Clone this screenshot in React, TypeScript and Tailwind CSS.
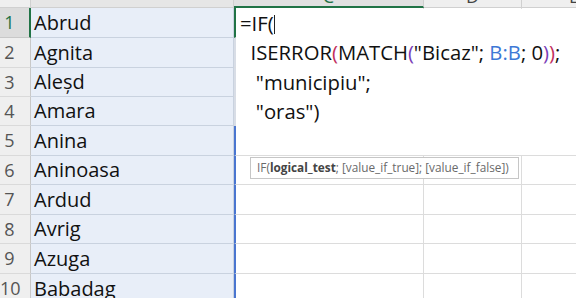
import React from "react";

const names = ["Abrud", "Agnita", "Aleșd", "Amara", "Anina", "Aninoasa", "Ardud", "Avrig", "Azuga", "Babadag"];
const heights = ["h-[30px]", "h-[30px]", "h-[29px]", "h-[29px]", "h-[30px]", "h-[29px]", "h-[30px]", "h-[29px]", "h-[30px]", "h-[30px]"];

export default function App() {
  const font = { fontFamily: '"Open Sans", "Noto Sans", sans-serif' };
  return (
    <div className="relative w-[576px] h-[298px] overflow-hidden bg-white" style={font}>
      {/* column header strip */}
      <div className="flex h-[8px] bg-[#efefef]">
        <div className="w-[31px] shrink-0 border-b border-r border-[#d0d0d0]" />
        <div className="w-[203px] shrink-0 border-b border-r border-[#d0d0d0] bg-[#e6e6e6] overflow-hidden" />
        <div className="w-[190px] shrink-0 border-b-2 border-b-[#217346] border-r border-r-[#d0d0d0] bg-[#e1e1e1] overflow-hidden flex justify-center">
          <span className="text-[18px] leading-none -mt-[13px] text-[#217346]">C</span>
        </div>
        <div className="w-[98px] shrink-0 border-b border-r border-[#d0d0d0] overflow-hidden flex justify-center">
          <span className="text-[18px] leading-none -mt-[13px] text-[#444]">D</span>
        </div>
        <div className="w-[104px] shrink-0 border-b border-[#d0d0d0] overflow-hidden flex justify-center">
          <span className="text-[18px] leading-none -mt-[13px] text-[#444]">E</span>
        </div>
      </div>

      {/* rows */}
      {names.map((n, i) => (
        <div key={n} className={`flex ${heights[i]}`}>
          <div
            className={`w-[31px] shrink-0 flex items-center border-b ${
              i === 0
                ? "bg-[#dcdcdc] border-r-2 border-r-[#217346] border-b-[#c8c8c8]"
                : "bg-[#efefef] border-r border-r-[#c8c8c8] border-b-[#dadada]"
            }`}
          >
            <span
              className={`w-[19px] text-center text-[18px] ${i === 0 ? "text-[#217346]" : "text-[#555]"}`}
            >
              {i + 1}
            </span>
          </div>
          <div className="w-[203px] shrink-0 bg-[#e8eef8] border-b border-r border-[#c9d2df] flex items-center pl-[3px] text-[20px] text-[#111]">
            {n}
          </div>
          <div
            className={`w-[190px] shrink-0 border-b border-r border-r-[#dcdcdc] border-b-[#dcdcdc] ${
              i === 0
                ? "border-l-2 border-l-[#217346]"
                : i < 4
                ? "border-l-2 border-l-[#d8dde6]"
                : "border-l-2 border-l-[#4a76d0]"
            }`}
          />
          <div className="w-[98px] shrink-0 border-b border-r border-[#dcdcdc]" />
          <div className="flex-1 border-b border-[#dcdcdc]" />
        </div>
      ))}

      {/* in-cell formula editor */}
      <div className="absolute left-[236px] top-[9px] w-[340px] h-[146px] bg-white text-[20.3px] leading-[29.4px] text-[#111] whitespace-pre">
        <div className="pl-[4px]">
          =IF(<span className="inline-block w-px h-[19px] bg-[#222] align-[-3px]" />
        </div>
        <div className="pl-[4px]">
          {"  ISERROR"}
          <span className="text-[#c2305e]">(</span>
          MATCH
          <span className="text-[#7b3fb8]">(</span>
          {'"Bicaz"; '}
          <span className="text-[#3d78d6]">B:B</span>
          {"; 0"}
          <span className="text-[#7b3fb8]">)</span>
          <span className="text-[#c2305e]">)</span>;
        </div>
        <div className="pl-[4px]">{'   "municipiu";'}</div>
        <div className="pl-[4px]">{'   "oras")'}</div>
      </div>

      {/* function tooltip */}
      <div className="absolute left-[250px] top-[157px] h-[22px] flex items-center pl-[6px] pr-[9px] bg-white border border-[#c6c6c6] text-[11.8px] text-[#6a6a6a] whitespace-pre">
        IF(<span className="font-bold text-[#444]">logical_test</span>; [value_if_true]; [value_if_false])
      </div>
    </div>
  );
}
